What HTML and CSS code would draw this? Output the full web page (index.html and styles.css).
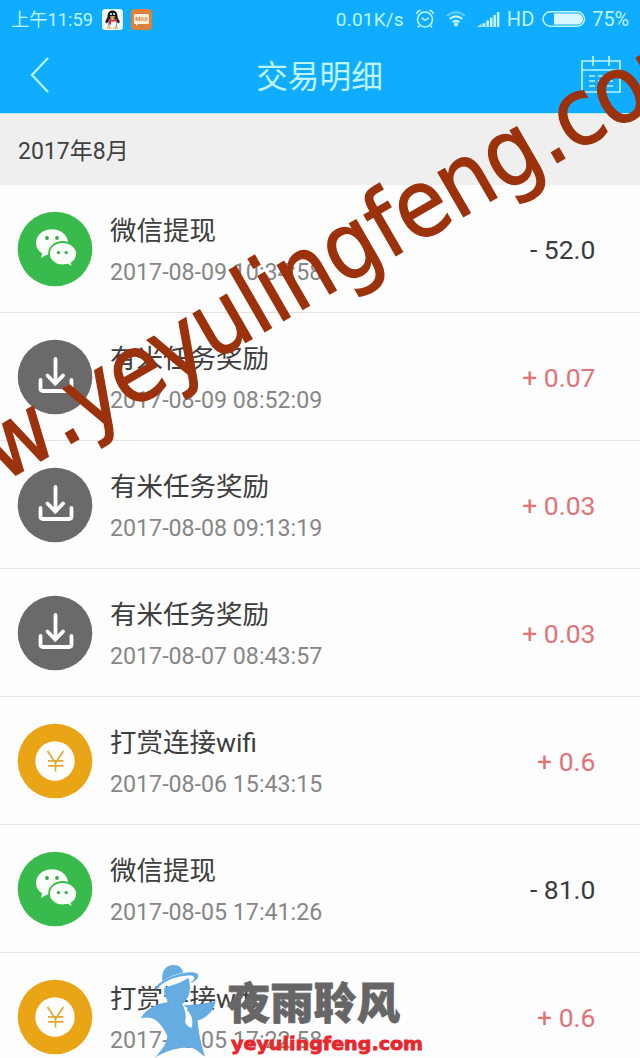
FILE: index.html
```html
<!DOCTYPE html>
<html lang="zh-CN">
<head>
<meta charset="utf-8">
<title>交易明细</title>
<link rel="stylesheet" href="styles.css">
</head>
<body>
<svg class="symbols" aria-hidden="true">
  <symbol id="wechat" viewBox="0 0 76 76">
    <circle cx="38" cy="38" r="37.3" fill="#38bb4c"/>
    <path fill="#fafffa" d="M35 18.2c-9 0-16 5.9-16 13.5 0 4.6 2.2 8.1 6 10.6L24 47l5.7-3.2 5.3.8c9 0 16-5.6 16-12.9S44 18.2 35 18.2z"/>
    <path fill="#fafffa" stroke="#38bb4c" stroke-width="1.8" d="M45.5 31C38 31 32 36.200 32 42.700s6 11.800 13.500 11.800l5-.7 5.500 3-1.300-4.800c3.200-2.100 5.300-5.400 5.300-9.300C60 36.200 53 31 45.500 31z"/>
    <g fill="#38a34e"><circle cx="30" cy="27" r="1.900"/><circle cx="40" cy="27" r="1.900"/><circle cx="41.500" cy="41.500" r="1.600"/><circle cx="49.200" cy="41.500" r="1.600"/></g>
  </symbol>
  <symbol id="download" viewBox="0 0 76 76">
    <circle cx="38" cy="38" r="37.300" fill="#6b696a"/>
    <g fill="none" stroke="#fff" stroke-width="3.800" stroke-linecap="round" stroke-linejoin="round">
      <path d="M38.500 20v23"/><path d="M30.500 36.500l7.800 8 7.800-8" stroke-linejoin="miter"/>
      <path d="M23.500 41v8.500q0 2.500 2.500 2.500h26q2.500 0 2.500-2.500V41"/>
    </g>
  </symbol>
  <symbol id="yuan" viewBox="0 0 76 76">
    <circle cx="38" cy="38" r="37.300" fill="#e9a515"/>
    <circle cx="38" cy="38" r="19.700" fill="#fff"/>
    <path d="M30.500 28l8 12 8-12M38.500 40v8.500M31 37.800h15.500M31 42.800h15.500" fill="none" stroke="#e3a632" stroke-width="1.700"/>
  </symbol>
</svg>

<main class="screen">
  <header class="header">
    <div class="status">
      <div class="status-left">
        <span class="clock">上午11:59</span>
        <svg class="badge" viewBox="0 0 21 21"><rect width="21" height="21" rx="3.500" fill="#effcff"/><path d="M5.500 8C5.500 3.500 7.500 1.500 10.500 1.500S15.500 3.500 15.500 8l2.200 4.500-.7 2-1.700-1.200-1 4.200h-7.500l-1-4.200L4 14.500l-.7-2z" fill="#111820"/><ellipse cx="10.500" cy="14" rx="4.200" ry="4.700" fill="#fff"/><path d="M6 9.500q4.500 2 9 0l.2 2q-3 1.500-6 1.100l-.4 3.200-2-.4.300-3.700z" fill="#e02f38"/><path d="M5 19h4.500M11.500 19H16" stroke="#d99021" stroke-width="1.200"/><ellipse cx="10.500" cy="8" rx="3" ry="1" fill="#e9a83a"/><circle cx="9" cy="5" r="1" fill="#fff"/><circle cx="12" cy="5" r="1" fill="#fff"/></svg>
        <svg class="badge miui" viewBox="0 0 21 21"><rect width="21" height="21" rx="4" fill="#dc803d"/><path d="M4 5h13q1 0 1 1v8q0 1-1 1H7l-2 2v-2H4q-1 0-1-1V6q0-1 1-1z" fill="#fff1de"/><text x="10.500" y="12.300" text-anchor="middle" class="miui-text">MIUI</text></svg>
      </div>
      <div class="status-right">
        <span class="speed">0.01K/s</span>
        <svg class="alarm" width="20" height="20" viewBox="0 0 20 20" fill="none" stroke="#bdf5ff" stroke-width="1.600"><circle cx="10" cy="10.500" r="7.500"/><path d="M6.800 8.800l3.200 2.500 3.800-2.500M1.500 5q1-3 4-3.700M18.500 5q-1-3-4-3.700M4.500 16.500l-1.500 2M15.500 16.500l1.500 2"/></svg>
        <svg class="wifi" width="20" height="16" viewBox="0 0 20 16" fill="none" stroke-width="2.200"><path d="M1 5q9-7.500 18 0" stroke="#5bcbff"/><path d="M3.800 8q6.200-5.300 12.400 0M6.700 11.200q3.300-2.800 6.600 0" stroke="#c8f8ff"/><circle cx="10" cy="13.500" r="2" fill="#c8f8ff"/></svg>
        <svg class="signal" width="23" height="17" viewBox="0 0 23 17" fill="#c8f8ff"><path d="M0 16l4.500-3v3zM5.500 12.300h2.800V16H5.500zM9.300 9.500h2.600V16H9.300zM12.900 6.800h2.600V16h-2.600zM16.500 4h2.400v12h-2.400zM19.900 1h2.500v15h-2.500z"/></svg>
        <span class="hd">HD</span>
        <svg class="battery" width="44" height="16" viewBox="0 0 44 16"><rect x="1" y=".8" width="41.500" height="14.400" rx="7.200" fill="none" stroke="#bdf5ff" stroke-width="1.500"/><path d="M12 2.500h23.500a5.500 5.500 0 0 1 0 11H12z" fill="#d9f6ff"/></svg>
        <span class="percent">75%</span>
      </div>
    </div>
    <nav class="nav">
      <svg width="20" height="38" viewBox="0 0 20 38"><path d="M18 2L2 19l16 17" fill="none" stroke="#b8f6ff" stroke-width="2.200"/></svg>
      <h1 class="title">交易明细</h1>
      <svg width="40" height="38" viewBox="0 0 40 38" fill="none" stroke="#b8f6ff" stroke-width="1.700"><path d="M1 5h38v31H1zM1 14h38M12 0v10M28 0v10M8 20h6M17 20h6M26 20h6M8 25h6M17 25h6M26 25h6M8 30h6M17 30h6M26 30h6"/></svg>
    </nav>
  </header>

  <h2 class="month">2017年8月</h2>

  <ul class="list">
    <li class="row"><svg class="icon"><use href="#wechat"/></svg><div class="info"><span class="name">微信提现</span><time class="date">2017-08-09 10:34:58</time></div><span class="amount">- 52.0</span></li>
    <li class="row"><svg class="icon"><use href="#download"/></svg><div class="info"><span class="name">有米任务奖励</span><time class="date">2017-08-09 08:52:09</time></div><span class="amount plus">+ 0.07</span></li>
    <li class="row"><svg class="icon"><use href="#download"/></svg><div class="info"><span class="name">有米任务奖励</span><time class="date">2017-08-08 09:13:19</time></div><span class="amount plus">+ 0.03</span></li>
    <li class="row"><svg class="icon"><use href="#download"/></svg><div class="info"><span class="name">有米任务奖励</span><time class="date">2017-08-07 08:43:57</time></div><span class="amount plus">+ 0.03</span></li>
    <li class="row"><svg class="icon"><use href="#yuan"/></svg><div class="info"><span class="name">打赏连接wifi</span><time class="date">2017-08-06 15:43:15</time></div><span class="amount plus">+ 0.6</span></li>
    <li class="row"><svg class="icon"><use href="#wechat"/></svg><div class="info"><span class="name">微信提现</span><time class="date">2017-08-05 17:41:26</time></div><span class="amount">- 81.0</span></li>
    <li class="row"><svg class="icon"><use href="#yuan"/></svg><div class="info"><span class="name">打赏连接wifi</span><time class="date">2017-08-05 17:22:58</time></div><span class="amount plus">+ 0.6</span></li>
  </ul>

  <svg class="overlay" width="640" height="1058" viewBox="0 0 640 1058">
    <text class="watermark" transform="translate(75 441) rotate(-30)" y="0" x="-190.7 -120.2 -49.7 0 38 86.7 135.3 185.5 222.9 244.7 282.1 334.9 376.2 416.3 467.8 520.6 561.2 597.5 645.2 710.9">www.yeyulingfeng.com</text>
    <g transform="translate(135 955) scale(.33333)" fill="#65ace2">
      <path d="M82 78C78 50 92 30 115 30C133 30 143 40 144 53C123 57 101 65 82 78Z"/>
      <path d="M60 104C64 92 70 86 80 80C103 64 138 54 165 52C185 51 193 58 189 67C185 77 174 82 163 84C178 75 183 67 172 62C150 58 85 72 70 100Z"/>
      <path d="M88 98C107 92 138 84 160 68C169 95 166 125 147 143C130 160 105 155 97 135C88 122 86 110 88 98Z"/>
      <path d="M17 190C35 160 65 145 100 142L145 150C180 150 215 145 242 138C238 165 215 190 188 196C190 235 200 270 210 305C190 290 180 278 165 278C140 275 95 285 60 308C75 290 95 270 97 243C90 225 75 205 62 195C48 185 30 186 17 190Z"/>
      <path d="M143 148L158 160L155 165C172 178 175 200 170 218C160 217 152 208 150 198C155 185 152 172 143 148Z" fill="#fff"/>
    </g>
    <text class="brand" x="227" y="1019" textLength="173" lengthAdjust="spacingAndGlyphs">夜雨聆风</text>
    <text class="brand-url" x="231" y="1050" textLength="192" lengthAdjust="spacingAndGlyphs">yeyulingfeng.com</text>
  </svg>
</main>
</body>
</html>
```
FILE: styles.css
```css
* { box-sizing: border-box; }
body { margin: 0; background: #fff; font-family: Roboto, "Noto Sans CJK SC", sans-serif; }
.symbols { position: absolute; width: 0; height: 0; }
.screen { position: relative; width: 640px; height: 1058px; overflow: hidden; background: #fefefe; }

.header { height: 114px; background: #10acff; border-bottom: 1px solid #b5efff; color: #bdf6ff; }
.status { display: flex; justify-content: space-between; height: 38px; padding: 0 11px; font-size: 18.500px; line-height: 37px; }
.status-left, .status-right { display: flex; align-items: center; }
.clock { width: 82px; font-size: 18.300px; white-space: nowrap; }
.badge { width: 21px; height: 21px; margin-left: 9px; }
.miui { margin-left: 8px; }
.miui-text { font: 700 6px Roboto, sans-serif; fill: #d7823f; }
.speed { font-size: 19px; letter-spacing: .2px; }
.alarm { margin-left: 11px; }
.wifi { margin-left: 11px; }
.signal { margin-left: 11px; }
.hd { margin-left: 7px; font-size: 20px; }
.battery { margin-left: 8px; }
.percent { margin-left: 6px; font-size: 19.800px; }
.nav { display: flex; align-items: center; justify-content: space-between; height: 75px; padding: 0 19px 2px 30px; }
.title { margin: 6px 0 0 8px; font-size: 31.700px; font-weight: 400; line-height: 40px; }

.month { height: 71px; margin: 0; padding-left: 18px; background: #efefef; color: #3f3f3f; font-size: 23px; font-weight: 400; line-height: 75px; }

.list { margin: 0; padding: 0; list-style: none; }
.row { display: flex; align-items: center; height: 128px; padding: 0 44.500px 0 17px; border-bottom: 1px solid #e0e0e0; }
.icon { width: 76px; height: 76px; }
.info { display: flex; flex: 1; flex-direction: column; gap: 4px; padding: 5px 0 0 17px; }
.name { color: #3d3d3d; font-size: 26.500px; line-height: 38px; }
.date { color: #868686; font-size: 23.200px; line-height: 36px; }
.amount { padding-top: 2px; color: #3b3b3b; font-size: 26.500px; }
.plus { color: #e47175; }

.overlay { position: absolute; inset: 0; }
.watermark { font: 93.500px "DejaVu Sans Condensed", "DejaVu Sans", sans-serif; font-stretch: condensed; text-anchor: middle; fill: #9b320c; stroke: #9b320c; stroke-width: 1.300px; }
.brand { font: 900 43px "Noto Sans CJK SC", sans-serif; fill: #666; stroke: #666; stroke-width: .8px; }
.brand-url { font: 700 18px "DejaVu Sans", sans-serif; fill: #e8262c; stroke: #e8262c; stroke-width: .8px; }
```
